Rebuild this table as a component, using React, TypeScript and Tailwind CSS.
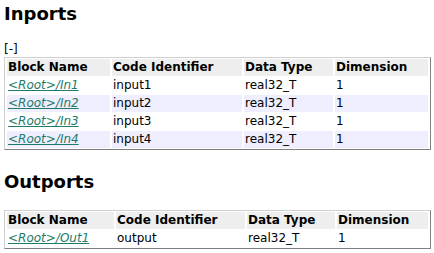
import React from "react";

type Row = { name: string; id: string; type: string; dim: string };

const inports: Row[] = [
  { name: "<Root>/In1", id: "input1", type: "real32_T", dim: "1" },
  { name: "<Root>/In2", id: "input2", type: "real32_T", dim: "1" },
  { name: "<Root>/In3", id: "input3", type: "real32_T", dim: "1" },
  { name: "<Root>/In4", id: "input4", type: "real32_T", dim: "1" },
];

const outports: Row[] = [
  { name: "<Root>/Out1", id: "output", type: "real32_T", dim: "1" },
];

function PortTable({ rows, widths }: { rows: Row[]; widths: [string, string, string, string] }) {
  return (
    <table className="w-[427px] table-fixed border-separate border-spacing-x-[2px] border-spacing-y-[1px] border border-t-[#cfcfcf] border-l-[#cfcfcf] border-r-[#808080] border-b-[#808080]">
      <colgroup>
        <col className={widths[0]} />
        <col className={widths[1]} />
        <col className={widths[2]} />
        <col className={widths[3]} />
      </colgroup>
      <thead>
        <tr className="bg-[#eeeeee]">
          <th className="h-[17px] p-0 pl-[1px] text-left font-bold leading-[17px]">Block Name</th>
          <th className="h-[17px] p-0 pl-[1px] text-left font-bold leading-[17px]">Code Identifier</th>
          <th className="h-[17px] p-0 pl-[1px] text-left font-bold leading-[17px]">Data Type</th>
          <th className="h-[17px] p-0 pl-[1px] text-left font-bold leading-[17px]">Dimension</th>
        </tr>
      </thead>
      <tbody>
        {rows.map((r, i) => (
          <tr key={r.name} className={i % 2 === 1 ? "bg-[#eeeeff]" : "bg-white"}>
            <td className="h-[17px] p-0 pl-[1px] leading-[17px]">
              <a href="#" className="italic text-[#1e7b67] underline">
                {r.name}
              </a>
            </td>
            <td className="h-[17px] p-0 pl-[1px] leading-[17px]">{r.id}</td>
            <td className="h-[17px] p-0 pl-[1px] leading-[17px]">{r.type}</td>
            <td className="h-[17px] p-0 pl-[1px] leading-[17px]">{r.dim}</td>
          </tr>
        ))}
      </tbody>
    </table>
  );
}

export default function App() {
  return (
    <div className="w-[434px] h-[253px] overflow-hidden bg-white pl-[4px] text-[12px] text-black font-['DejaVu_Sans',sans-serif]">
      <h3 className="mt-[3px] h-[22px] text-[18px] font-bold leading-[22px]">Inports</h3>
      <div className="mt-[17px] h-[15px] leading-[15px]">[-]</div>
      <PortTable rows={inports} widths={["w-[103px]", "w-[130px]", "w-[89px]", "w-[93px]"]} />
      <h3 className="mt-[21px] h-[22px] text-[18px] font-bold leading-[22px]">Outports</h3>
      <div className="mt-[17px]">
        <PortTable rows={outports} widths={["w-[107px]", "w-[129px]", "w-[88px]", "w-[91px]"]} />
      </div>
    </div>
  );
}
